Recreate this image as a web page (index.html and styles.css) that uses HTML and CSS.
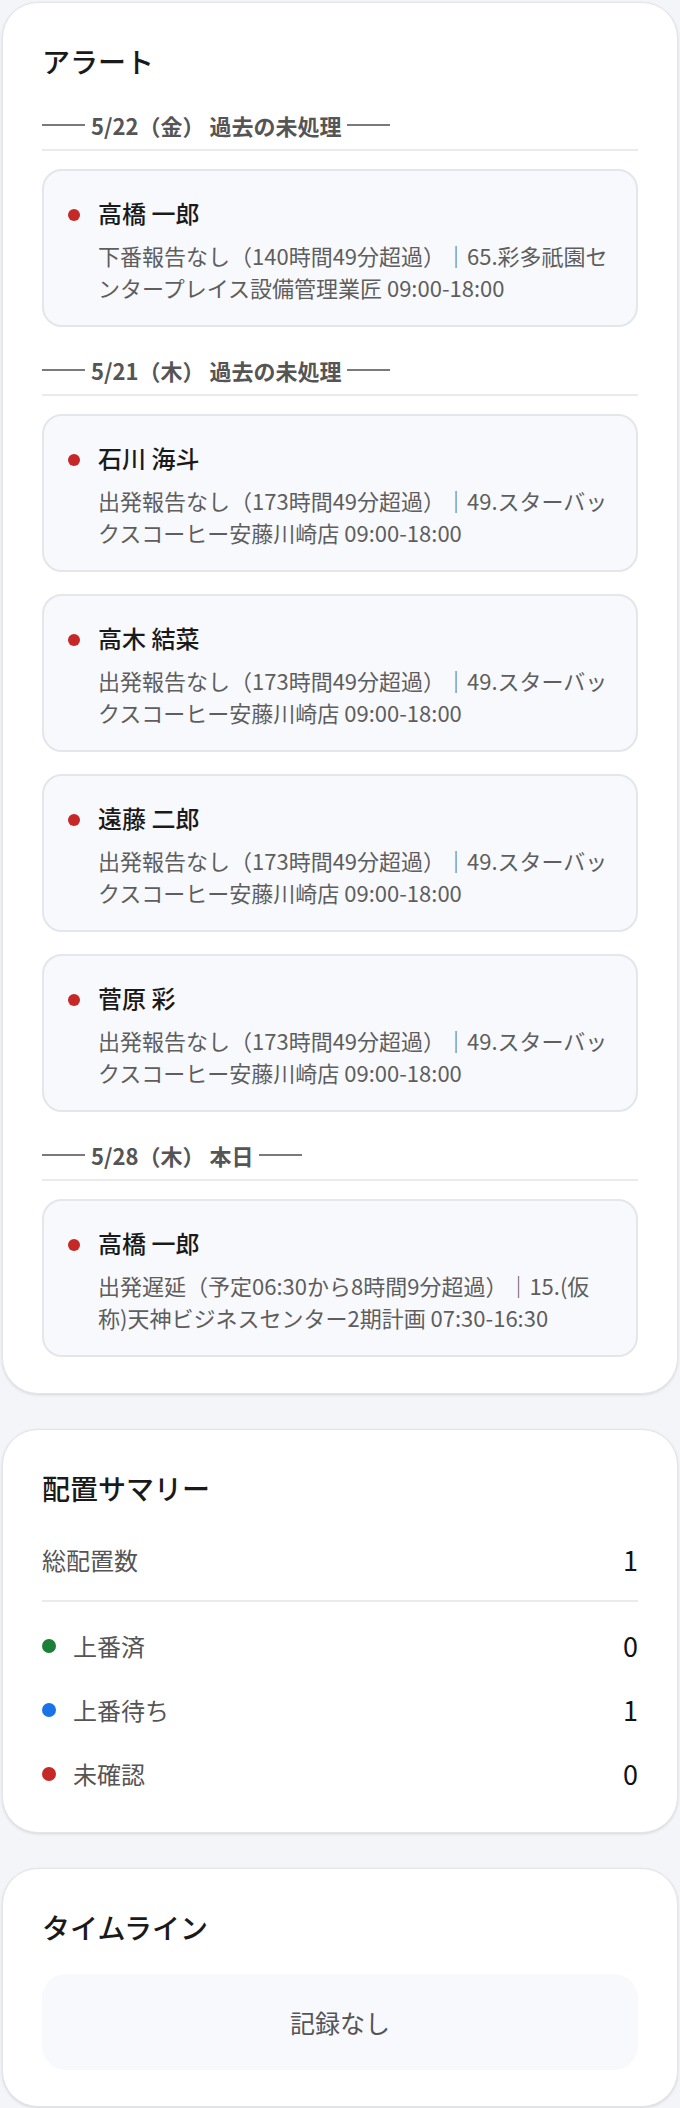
FILE: index.html
```html
<!DOCTYPE html>
<html lang="ja">
<head>
<meta charset="utf-8">
<title>ダッシュボード</title>
<link rel="stylesheet" href="styles.css">
</head>
<body>
<main class="page">
  <section class="panel">
    <h2 class="panel-title">アラート</h2>

    <div class="group">
      <div class="group-head"><span class="group-label">5/22（金） 過去の未処理</span></div>
      <div class="alerts">
        <div class="alert">
          <span class="dot dot-red"></span>
          <div class="alert-body">
            <div class="alert-name">高橋 一郎</div>
            <div class="alert-desc">下番報告なし（140時間49分超過）｜65.彩多祇園センタープレイス設備管理業匠 09:00-18:00</div>
          </div>
        </div>
      </div>
    </div>

    <div class="group">
      <div class="group-head"><span class="group-label">5/21（木） 過去の未処理</span></div>
      <div class="alerts">
        <div class="alert">
          <span class="dot dot-red"></span>
          <div class="alert-body">
            <div class="alert-name">石川 海斗</div>
            <div class="alert-desc">出発報告なし（173時間49分超過）｜49.スターバックスコーヒー安藤川崎店 09:00-18:00</div>
          </div>
        </div>
        <div class="alert">
          <span class="dot dot-red"></span>
          <div class="alert-body">
            <div class="alert-name">高木 結菜</div>
            <div class="alert-desc">出発報告なし（173時間49分超過）｜49.スターバックスコーヒー安藤川崎店 09:00-18:00</div>
          </div>
        </div>
        <div class="alert">
          <span class="dot dot-red"></span>
          <div class="alert-body">
            <div class="alert-name">遠藤 二郎</div>
            <div class="alert-desc">出発報告なし（173時間49分超過）｜49.スターバックスコーヒー安藤川崎店 09:00-18:00</div>
          </div>
        </div>
        <div class="alert">
          <span class="dot dot-red"></span>
          <div class="alert-body">
            <div class="alert-name">菅原 彩</div>
            <div class="alert-desc">出発報告なし（173時間49分超過）｜49.スターバックスコーヒー安藤川崎店 09:00-18:00</div>
          </div>
        </div>
      </div>
    </div>

    <div class="group">
      <div class="group-head"><span class="group-label">5/28（木） 本日</span></div>
      <div class="alerts">
        <div class="alert">
          <span class="dot dot-red"></span>
          <div class="alert-body">
            <div class="alert-name">高橋 一郎</div>
            <div class="alert-desc">出発遅延（予定06:30から8時間9分超過）｜15.(仮称)天神ビジネスセンター2期計画 07:30-16:30</div>
          </div>
        </div>
      </div>
    </div>
  </section>

  <section class="panel panel-summary">
    <h2 class="panel-title">配置サマリー</h2>
    <div class="total-row">
      <span class="sum-label">総配置数</span>
      <span class="sum-value">1</span>
    </div>
    <ul class="sum-list">
      <li class="sum-row">
        <span class="sum-key"><span class="sdot dot-green"></span><span class="sum-label">上番済</span></span>
        <span class="sum-value">0</span>
      </li>
      <li class="sum-row">
        <span class="sum-key"><span class="sdot dot-blue"></span><span class="sum-label">上番待ち</span></span>
        <span class="sum-value">1</span>
      </li>
      <li class="sum-row">
        <span class="sum-key"><span class="sdot dot-red"></span><span class="sum-label">未確認</span></span>
        <span class="sum-value">0</span>
      </li>
    </ul>
  </section>

  <section class="panel panel-timeline">
    <h2 class="panel-title">タイムライン</h2>
    <div class="empty">記録なし</div>
  </section>
</main>
</body>
</html>
```

FILE: styles.css
```css
* { box-sizing: border-box; }

html, body {
  margin: 0;
  padding: 0;
}

body {
  background: #f4f5f8;
  font-family: "Noto Sans CJK JP", "Noto Sans", sans-serif;
  color: #1a1a1a;
}

.page {
  display: flex;
  flex-direction: column;
  gap: 35px;
  padding: 2px 2px 1px;
}

.panel {
  background: #ffffff;
  border: 1px solid #e3e5e9;
  border-radius: 36px;
  box-shadow: 0 1px 3px rgba(0, 0, 0, 0.12);
  padding: 39px 39px 36px;
}

.panel-title {
  margin: 0;
  font-size: 28px;
  line-height: 38px;
  font-weight: 500;
  color: #1a1a1a;
}

/* alert groups */
.group {
  margin-top: 28px;
}
.panel > .group:first-of-type {
  margin-top: 30px;
}

.group-head {
  display: flex;
  border-bottom: 2px solid #ebebec;
  padding-bottom: 9px;
}

.group-label {
  display: flex;
  align-items: center;
  gap: 6px;
  font-size: 22px;
  line-height: 30px;
  font-weight: 700;
  color: #555555;
  white-space: pre;
}
.group-label::before,
.group-label::after {
  content: "";
  display: block;
  width: 43px;
  height: 1.5px;
  background: #7a7a7a;
}

.alerts {
  display: flex;
  flex-direction: column;
  gap: 22px;
  margin-top: 18px;
}

.alert {
  display: flex;
  align-items: flex-start;
  gap: 18px;
  background: #f8f9fc;
  border: 2px solid #e3e6ea;
  border-radius: 20px;
  padding: 24px 25px 22px 24px;
  min-height: 158px;
}

.dot {
  flex: none;
  width: 12px;
  height: 12px;
  border-radius: 50%;
  margin-top: 14px;
}
.dot-red { background: #c62828; }
.dot-green { background: #1b7f3a; }
.dot-blue { background: #1a73e8; }

.alert-body {
  flex: 1;
  min-width: 0;
}

.alert-name {
  font-size: 24px;
  line-height: 36px;
  font-weight: 500;
  color: #1a1a1a;
}

.alert-desc {
  margin-top: 8px;
  font-size: 22px;
  line-height: 32px;
  color: #5e5e5e;
}

/* summary */
.panel-summary {
  padding-bottom: 26px;
}

.total-row {
  display: flex;
  justify-content: space-between;
  align-items: center;
  margin-top: 35px;
  padding-bottom: 22px;
  border-bottom: 2px solid #ebebec;
  line-height: 36px;
}

.sum-list {
  list-style: none;
  margin: 0;
  padding: 12px 0 0;
}

.sum-row {
  display: flex;
  justify-content: space-between;
  align-items: center;
  padding: 14px 0;
  line-height: 36px;
}

.sum-key {
  display: flex;
  align-items: center;
  gap: 17px;
}

.sdot {
  width: 14px;
  height: 14px;
  border-radius: 50%;
  flex: none;
}

.sum-label {
  font-size: 24px;
  color: #555555;
}

.sum-value {
  font-size: 27px;
  color: #111111;
}

/* timeline */
.empty {
  margin-top: 28px;
  height: 96px;
  border-radius: 24px;
  background: #f8f9fc;
  display: flex;
  align-items: center;
  justify-content: center;
  font-size: 25px;
  color: #555555;
}
```
